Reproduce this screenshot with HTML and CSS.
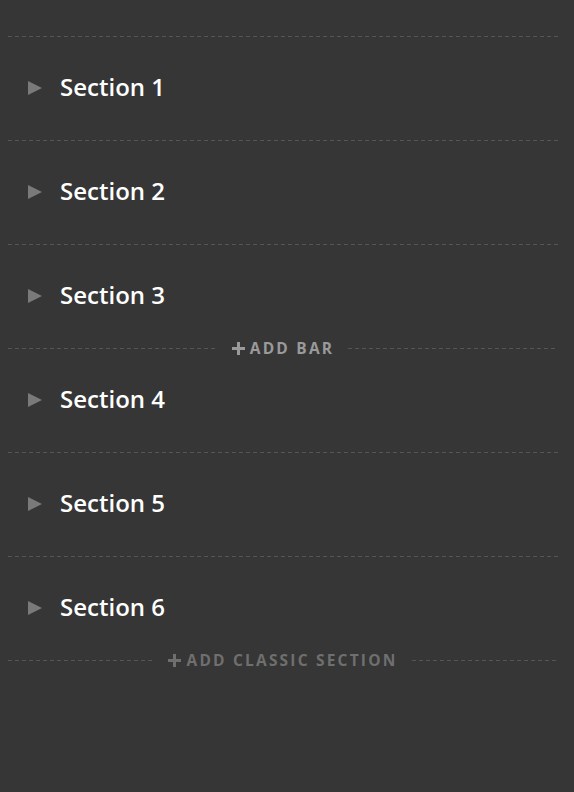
FILE: index.html
```html
<!DOCTYPE html>
<html>
<head>
<meta charset="utf-8">
<link rel="stylesheet" href="styles.css">
</head>
<body>
<div class="panel">
  <div class="divider"><span class="line"></span></div>
  <div class="section"><span class="arrow"></span><span class="title">Section 1</span></div>
  <div class="divider"><span class="line"></span></div>
  <div class="section"><span class="arrow"></span><span class="title">Section 2</span></div>
  <div class="divider"><span class="line"></span></div>
  <div class="section"><span class="arrow"></span><span class="title">Section 3</span></div>
  <div class="divider"><span class="line"></span><span class="add add-bar"><span class="plus"></span>ADD BAR</span><span class="line"></span></div>
  <div class="section"><span class="arrow"></span><span class="title">Section 4</span></div>
  <div class="divider"><span class="line"></span></div>
  <div class="section"><span class="arrow"></span><span class="title">Section 5</span></div>
  <div class="divider"><span class="line"></span></div>
  <div class="section"><span class="arrow"></span><span class="title">Section 6</span></div>
  <div class="divider"><span class="line"></span><span class="add add-classic"><span class="plus"></span>ADD CLASSIC SECTION</span><span class="line"></span></div>
</div>
</body>
</html>
```

FILE: styles.css
```css
html, body {
  margin: 0;
  padding: 0;
  background: #363636;
  height: 100%;
}
body {
  font-family: "Open Sans", "Liberation Sans", sans-serif;
}
.panel {
  padding: 36px 16px 0 8px;
}
.divider {
  height: 1px;
  display: flex;
  align-items: center;
}
.line {
  flex: 1;
  height: 1px;
  background: repeating-linear-gradient(to right, #555555 0 4px, transparent 4px 7px);
}
.add {
  font-weight: 700;
  font-size: 15.5px;
  letter-spacing: 2.2px;
  padding: 0 14px 0 14px;
  display: flex;
  align-items: center;
  line-height: 1;
}
.add-bar { color: #9a9a9a; }
.add-classic { color: #6f6f6f; }
.plus {
  position: relative;
  width: 13px;
  height: 13px;
  margin-right: 5px;
  margin-top: -1px;
}
.plus::before,
.plus::after {
  content: "";
  position: absolute;
  background: currentColor;
}
.plus::before {
  left: 0;
  right: 0;
  top: 5px;
  height: 3px;
}
.plus::after {
  top: 0;
  bottom: 0;
  left: 5px;
  width: 3px;
}
.section {
  box-sizing: border-box;
  height: 103px;
  display: flex;
  align-items: center;
  padding-left: 20px;
  padding-bottom: 5px;
}
.arrow {
  width: 0;
  height: 0;
  border-style: solid;
  border-width: 7px 0 7px 14px;
  border-color: transparent transparent transparent #7a7a7a;
  margin-right: 18px;
  margin-top: 3px;
}
.title {
  color: #ffffff;
  font-weight: 600;
  font-size: 24px;
}
```
